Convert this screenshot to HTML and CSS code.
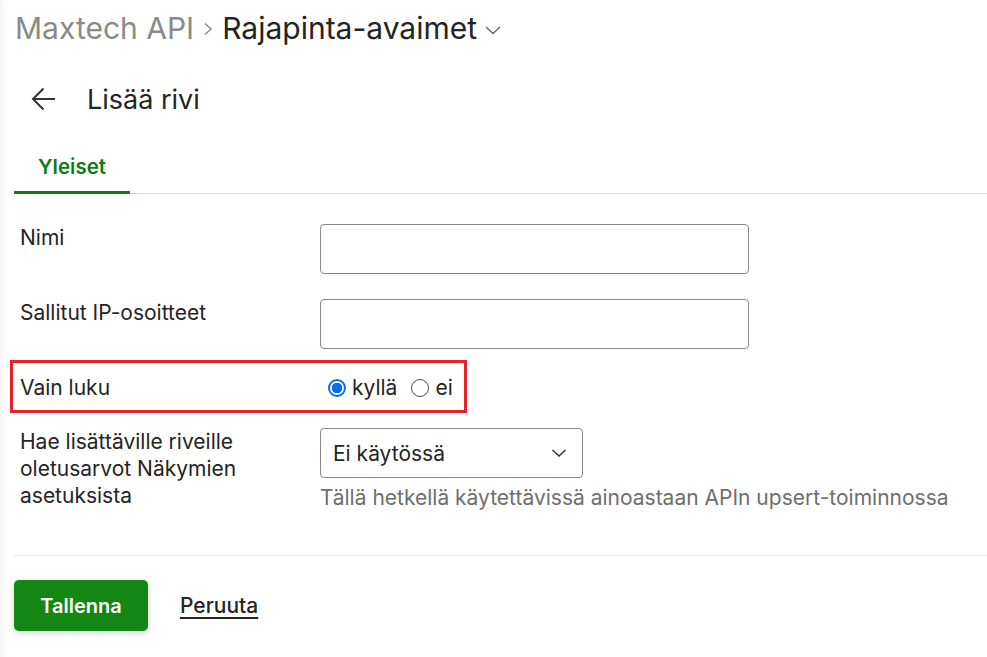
FILE: index.html
```html
<!DOCTYPE html>
<html lang="fi">
<head>
    <meta charset="UTF-8">
    <meta name="viewport" content="width=device-width, initial-scale=1.0">
    <title>Rajapinta-avaimet – Lisää rivi</title>
    <link rel="stylesheet" href="styles.css">
</head>
<body>
    <div class="page">
        <div class="breadcrumb">
            <span class="crumb-parent">Maxtech API</span>
            <svg class="crumb-sep" width="12" height="16" viewBox="0 0 12 16"><path d="M3 2.5 L9 8 L3 13.5" fill="none" stroke="#8a8a8a" stroke-width="1.4"/></svg>
            <span class="crumb-current">Rajapinta-avaimet</span>
            <svg class="crumb-menu" width="18" height="12" viewBox="0 0 18 12"><path d="M2 3 L9 9.5 L16 3" fill="none" stroke="#666" stroke-width="1.4"/></svg>
        </div>

        <div class="title-bar">
            <button class="back-btn" aria-label="Takaisin">
                <svg width="26" height="24" viewBox="0 0 26 24"><path d="M24 12 H2.5 M12.5 1.5 L2 12 L12.5 22.5" fill="none" stroke="#333" stroke-width="2"/></svg>
            </button>
            <h1>Lisää rivi</h1>
        </div>

        <div class="tabs">
            <div class="tab active">Yleiset</div>
        </div>

        <form class="form">
            <div class="row">
                <label class="row-label" for="name">Nimi</label>
                <input class="text-input" id="name" type="text">
            </div>
            <div class="row">
                <label class="row-label" for="ips">Sallitut IP-osoitteet</label>
                <input class="text-input" id="ips" type="text">
            </div>
            <div class="row row-radio marked">
                <span class="row-label">Vain luku</span>
                <div class="radios">
                    <label class="radio"><input type="radio" name="readonly" checked> kyllä</label>
                    <label class="radio"><input type="radio" name="readonly"> ei</label>
                </div>
            </div>
            <div class="row">
                <label class="row-label" for="defaults">Hae lisättäville riveille oletusarvot Näkymien asetuksista</label>
                <div class="field">
                    <div class="select-wrap">
                        <select class="select" id="defaults">
                            <option>Ei käytössä</option>
                        </select>
                        <svg class="select-arrow" width="16" height="10" viewBox="0 0 16 10"><path d="M1.5 2 L8 8 L14.5 2" fill="none" stroke="#333" stroke-width="1.5"/></svg>
                    </div>
                    <div class="hint">Tällä hetkellä käytettävissä ainoastaan APIn upsert-toiminnossa</div>
                </div>
            </div>

            <div class="actions">
                <button type="button" class="btn-primary">Tallenna</button>
                <a href="#" class="btn-link">Peruuta</a>
            </div>
        </form>
    </div>
</body>
</html>
```

FILE: styles.css
```css
body {
    margin: 0;
    font-family: Inter, "Noto Sans", sans-serif;
    color: #242424;
    background-color: #ffffff;
}
.page {
    min-height: 657px;
    padding-left: 14px;
    box-shadow: inset 8px 0 8px -6px rgba(0, 0, 0, 0.05);
}
.breadcrumb {
    display: flex;
    align-items: center;
    height: 56px;
    padding-left: 1px;
    font-size: 30px;
}
.crumb-parent {
    color: #8a8a8a;
}
.crumb-sep {
    margin: 2px 8px 0 8px;
}
.crumb-current {
    color: #242424;
}
.crumb-menu {
    margin: 4px 0 0 7px;
}
.title-bar {
    display: flex;
    align-items: center;
    height: 30px;
    margin-top: 28px;
}
.back-btn {
    background: none;
    border: none;
    padding: 0;
    margin-left: 17px;
    width: 26px;
    height: 24px;
    cursor: pointer;
}
.back-btn svg {
    display: block;
}
h1 {
    margin: 0 0 0 30px;
    font-size: 27px;
    font-weight: 400;
}
.tabs {
    display: flex;
    margin-top: 36px;
    border-bottom: 1px solid #d6d6d6;
}
.tab {
    padding: 0 24px;
    line-height: 34px;
    font-size: 20.5px;
    font-weight: 600;
}
.tab.active {
    color: #107c10;
    border-bottom: 3px solid #107c10;
    margin-bottom: -1px;
    box-sizing: border-box;
    height: 44px;
}
.form {
    padding-top: 30px;
}
.row {
    display: flex;
    align-items: flex-start;
    padding-left: 6px;
    margin-bottom: 25px;
    font-size: 21px;
    line-height: 27px;
}
.row-label {
    width: 300px;
    flex-shrink: 0;
    padding-right: 30px;
    box-sizing: border-box;
}
.text-input {
    width: 429px;
    height: 50px;
    box-sizing: border-box;
    border: 1px solid #8a8a8a;
    border-radius: 4px;
    font: inherit;
    padding: 0 12px;
}
.row-radio {
    margin-bottom: 27px;
}
/* red frame drawn round the read-only row */
.marked {
    position: relative;
}
.marked::before {
    content: "";
    position: absolute;
    left: -4px;
    top: -14px;
    width: 457px;
    height: 53px;
    box-sizing: border-box;
    border: 3px solid #e3242b;
    pointer-events: none;
}
.radios {
    display: flex;
    align-items: center;
    gap: 14px;
    padding-left: 8px;
}
.radio {
    display: flex;
    align-items: center;
    gap: 6px;
}
.radio input {
    appearance: none;
    margin: 0;
    width: 18px;
    height: 18px;
    border-radius: 50%;
    border: 1.5px solid #4a4a4a;
    box-sizing: border-box;
    background: #fff;
}
.radio input:checked {
    border: 2px solid #0b6cf0;
    background: radial-gradient(circle, #0b6cf0 0 5px, #fff 5.5px);
}
.field {
    display: flex;
    flex-direction: column;
}
.select-wrap {
    position: relative;
    width: 263px;
}
.select {
    appearance: none;
    width: 100%;
    height: 50px;
    border: 1px solid #8a8a8a;
    border-radius: 4px;
    background: #fff;
    font: inherit;
    color: #242424;
    padding: 0 12px;
}
.select-arrow {
    position: absolute;
    right: 16px;
    top: 20px;
    pointer-events: none;
}
.hint {
    margin-top: 6px;
    color: #6e6e6e;
    white-space: nowrap;
}
.actions {
    display: flex;
    align-items: center;
    gap: 32px;
    border-top: 1px solid #e6e6e6;
    margin-top: 44px;
    padding-top: 24px;
}
.btn-primary {
    width: 134px;
    height: 51px;
    border: none;
    border-radius: 5px;
    background-color: #138613;
    color: #ffffff;
    font-family: inherit;
    font-size: 20px;
    font-weight: 600;
    box-shadow: 0 2px 6px rgba(0, 0, 0, 0.18);
    cursor: pointer;
}
.btn-link {
    color: #242424;
    font-size: 21px;
    font-weight: 500;
    text-decoration: underline;
    text-decoration-thickness: 2px;
    text-underline-offset: 4px;
}
```
